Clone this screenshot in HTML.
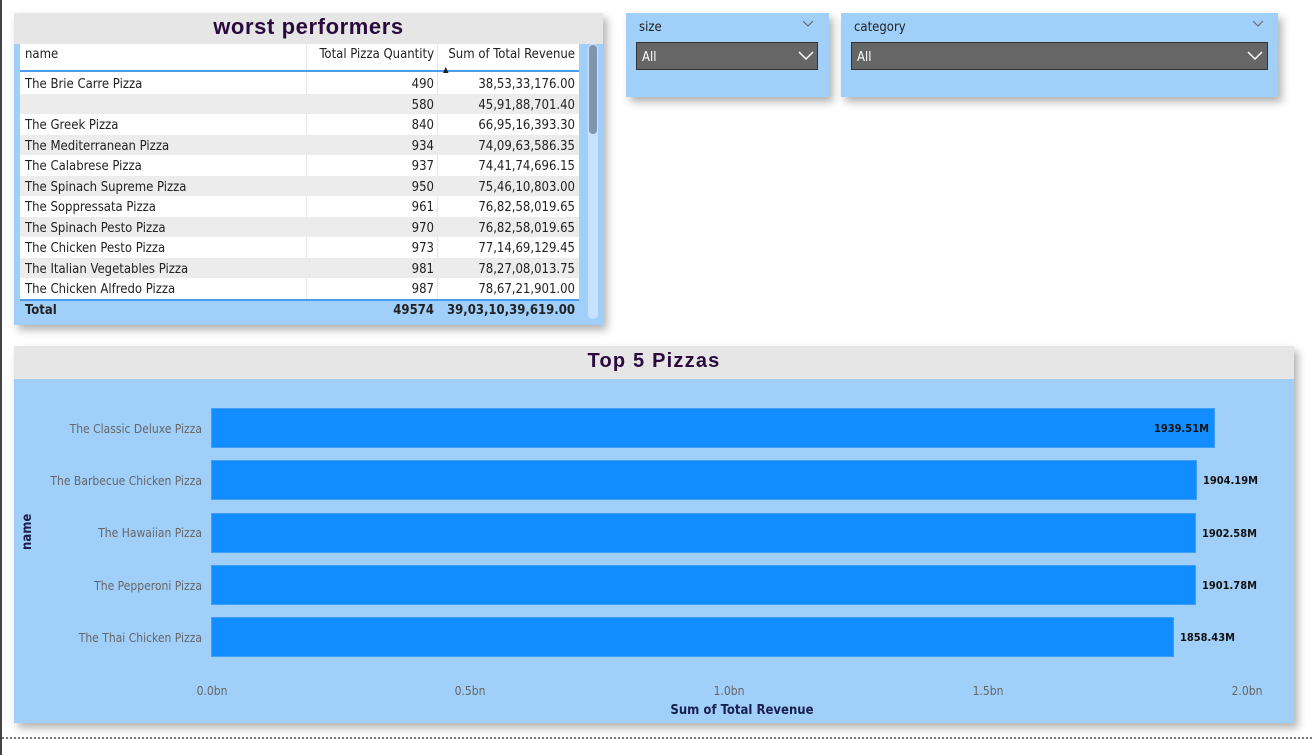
<!DOCTYPE html>
<html><head><style>
*{margin:0;padding:0;box-sizing:border-box}
body{width:1312px;height:755px;background:#fff;position:relative;overflow:hidden;font-family:"DejaVu Sans Condensed","Liberation Sans",sans-serif}
.abs{position:absolute}
.shadow{box-shadow:4px 5px 8px rgba(0,0,0,.3)}
.title{font-family:"Liberation Sans",sans-serif;font-weight:bold;color:#2b0a3d;text-align:center}
.row{position:absolute;left:20px;width:559px;height:20.5px;font-size:13px;color:#222;line-height:24px}
.row span{position:absolute;top:0}
.c1{left:5px}
.c2{right:145px;text-align:right}
.c3{right:4px;text-align:right}
.lbl{position:absolute;right:1110px;font-size:12px;color:#666;text-align:right;white-space:nowrap}
.bar{position:absolute;left:211px;height:40px;background:#118dff;border:1px solid #3f9ff5}
.val{position:absolute;font-size:11px;font-weight:bold;color:#111}
.tick{position:absolute;top:684px;font-size:12px;color:#666;transform:translateX(-50%)}
</style></head><body>
<div class="abs" style="left:0;top:0;width:2px;height:755px;background:#444"></div>

<!-- table -->
<div class="abs shadow" style="left:14px;top:13px;width:589px;height:312px;background:#a0cffa">
  <div class="abs title" style="left:0;top:0;width:589px;height:31px;background:#e6e6e6;font-size:22px;line-height:27px;letter-spacing:0.6px">worst performers</div>
</div>
<div class="abs" style="left:20px;top:44px;width:559px;height:256px;background:#fff"></div>
<div class="abs" style="left:306px;top:44px;width:1px;height:256px;background:#e4e8ee"></div>
<div class="abs" style="left:437px;top:44px;width:1px;height:256px;background:#e4e8ee"></div>
<div class="row" style="top:44px;height:28px;border-bottom:2px solid #4a9cf0;line-height:22px">
  <span class="c1">name</span><span class="c2">Total Pizza Quantity</span><span class="c3">Sum of Total Revenue</span>
  <span style="left:423px;top:15px;font-size:8px">&#9650;</span>
</div>
<div class="row" style="top:73px"><span class="c1">The Brie Carre Pizza</span><span class="c2">490</span><span class="c3">38,53,33,176.00</span></div>
<div class="row" style="top:93.5px;background:#ececec"><span class="c1"></span><span class="c2">580</span><span class="c3">45,91,88,701.40</span></div>
<div class="row" style="top:114px"><span class="c1">The Greek Pizza</span><span class="c2">840</span><span class="c3">66,95,16,393.30</span></div>
<div class="row" style="top:134.5px;background:#ececec"><span class="c1">The Mediterranean Pizza</span><span class="c2">934</span><span class="c3">74,09,63,586.35</span></div>
<div class="row" style="top:155px"><span class="c1">The Calabrese Pizza</span><span class="c2">937</span><span class="c3">74,41,74,696.15</span></div>
<div class="row" style="top:175.5px;background:#ececec"><span class="c1">The Spinach Supreme Pizza</span><span class="c2">950</span><span class="c3">75,46,10,803.00</span></div>
<div class="row" style="top:196px"><span class="c1">The Soppressata Pizza</span><span class="c2">961</span><span class="c3">76,82,58,019.65</span></div>
<div class="row" style="top:216.5px;background:#ececec"><span class="c1">The Spinach Pesto Pizza</span><span class="c2">970</span><span class="c3">76,82,58,019.65</span></div>
<div class="row" style="top:237px"><span class="c1">The Chicken Pesto Pizza</span><span class="c2">973</span><span class="c3">77,14,69,129.45</span></div>
<div class="row" style="top:257.5px;background:#ececec"><span class="c1">The Italian Vegetables Pizza</span><span class="c2">981</span><span class="c3">78,27,08,013.75</span></div>
<div class="row" style="top:278px"><span class="c1">The Chicken Alfredo Pizza</span><span class="c2">987</span><span class="c3">78,67,21,901.00</span></div>
<div class="row" style="top:299px;height:21px;border-top:2px solid #4a9cf0;font-weight:bold;line-height:20px"><span class="c1">Total</span><span class="c2">49574</span><span class="c3">39,03,10,39,619.00</span></div>
<div class="abs" style="left:588px;top:44px;width:10px;height:275px;background:#c6e2fc;border-radius:5px"></div>
<div class="abs" style="left:589px;top:45px;width:8px;height:89px;background:#7f95ab;border-radius:4px"></div>

<!-- slicers -->
<div class="abs shadow" style="left:626px;top:13px;width:203px;height:84px;background:#a0cffa"></div>
<div class="abs" style="left:639px;top:20px;font-size:13px;color:#222">size</div>
<svg class="abs" style="left:802px;top:20px" width="12" height="8"><path d="M1 1L6 6L11 1" stroke="#666" fill="none"/></svg>
<div class="abs" style="left:636px;top:42px;width:182px;height:28px;background:#666;border:1px solid #333;color:#fff;font-size:13px;line-height:30px;padding-left:5px">All</div>
<svg class="abs" style="left:798px;top:51px" width="16" height="10"><path d="M1 1L8 8L15 1" stroke="#fff" stroke-width="1.5" fill="none"/></svg>

<div class="abs shadow" style="left:841px;top:13px;width:437px;height:84px;background:#a0cffa"></div>
<div class="abs" style="left:854px;top:20px;font-size:13px;color:#222">category</div>
<svg class="abs" style="left:1252px;top:20px" width="12" height="8"><path d="M1 1L6 6L11 1" stroke="#666" fill="none"/></svg>
<div class="abs" style="left:851px;top:42px;width:417px;height:28px;background:#666;border:1px solid #333;color:#fff;font-size:13px;line-height:30px;padding-left:5px">All</div>
<svg class="abs" style="left:1247px;top:51px" width="16" height="10"><path d="M1 1L8 8L15 1" stroke="#fff" stroke-width="1.5" fill="none"/></svg>

<!-- chart -->
<div class="abs shadow" style="left:14px;top:346px;width:1280px;height:377px;background:#a0cffa">
  <div class="abs title" style="left:0;top:0;width:1280px;height:33px;background:#e6e6e6;font-size:20px;line-height:31px;letter-spacing:1.2px">Top 5 Pizzas</div>
</div>
<div class="lbl" style="top:422px">The Classic Deluxe Pizza</div>
<div class="lbl" style="top:474px">The Barbecue Chicken Pizza</div>
<div class="lbl" style="top:526px">The Hawaiian Pizza</div>
<div class="lbl" style="top:579px">The Pepperoni Pizza</div>
<div class="lbl" style="top:631px">The Thai Chicken Pizza</div>
<div class="abs" style="left:20px;top:532px;transform:rotate(-90deg);transform-origin:left top;font-size:13px;font-weight:bold;color:#1a1f4d;margin-top:18px">name</div>
<div class="bar" style="top:408px;width:1004px"></div>
<div class="bar" style="top:460px;width:986px"></div>
<div class="bar" style="top:513px;width:985px"></div>
<div class="bar" style="top:565px;width:985px"></div>
<div class="bar" style="top:617px;width:963px"></div>
<div class="val" style="left:1154px;top:422px">1939.51M</div>
<div class="val" style="left:1203px;top:474px">1904.19M</div>
<div class="val" style="left:1202px;top:527px">1902.58M</div>
<div class="val" style="left:1202px;top:579px">1901.78M</div>
<div class="val" style="left:1180px;top:631px">1858.43M</div>
<div class="tick" style="left:212px">0.0bn</div>
<div class="tick" style="left:470px">0.5bn</div>
<div class="tick" style="left:729px">1.0bn</div>
<div class="tick" style="left:988px">1.5bn</div>
<div class="tick" style="left:1247px">2.0bn</div>
<div class="abs" style="left:0;width:1484px;top:703px;text-align:center;font-size:13px;font-weight:bold;color:#1a1f4d">Sum of Total Revenue</div>

<div class="abs" style="left:2px;top:737px;width:1310px;border-top:2px dotted #777"></div>
</body></html>
